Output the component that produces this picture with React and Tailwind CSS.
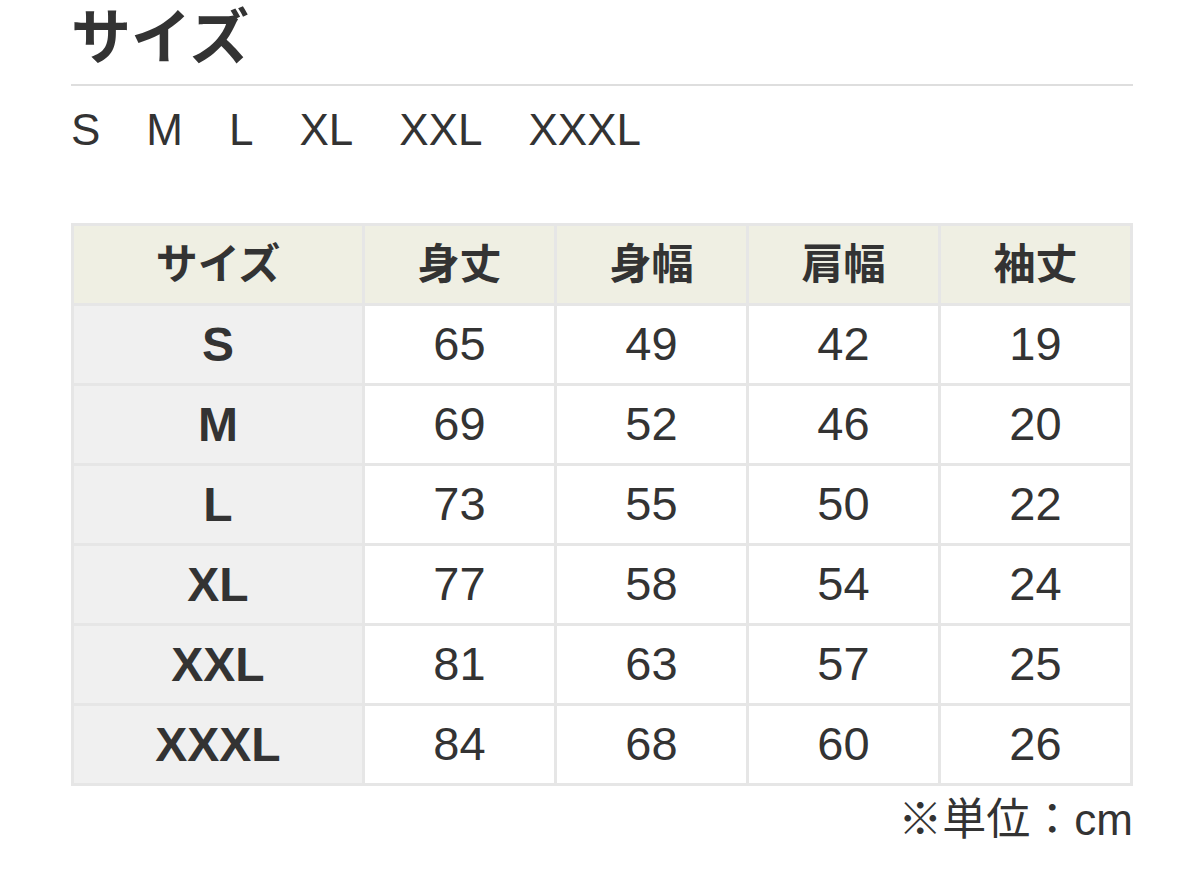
const sizes = ['S', 'M', 'L', 'XL', 'XXL', 'XXXL'];

const headers = ['サイズ', '身丈', '身幅', '肩幅', '袖丈'];

const rows = [
  ['S', 65, 49, 42, 19],
  ['M', 69, 52, 46, 20],
  ['L', 73, 55, 50, 22],
  ['XL', 77, 58, 54, 24],
  ['XXL', 81, 63, 57, 25],
  ['XXXL', 84, 68, 60, 26],
];

export default function App() {
  return (
    <div className="min-h-[872px] bg-white text-[#333] font-['Liberation_Sans','Noto_Sans_CJK_JP',sans-serif]">
      <div className="ml-[71px] w-[1062px]">
        <h2 className="h-[86px] pt-[1px] text-[60px] font-bold leading-[76px] border-b-2 border-[#dedede]">
          サイズ
        </h2>

        <div className="mt-[22px] flex gap-[46px] text-[44px] leading-[44px]">
          {sizes.map((s) => (
            <span key={s}>{s}</span>
          ))}
        </div>

        {/* size chart */}
        <div className="mt-[71px] grid grid-cols-[288px_repeat(4,1fr)] auto-rows-[77px] gap-[3px] p-[3px] bg-[#e6e6e6]">
          {headers.map((h) => (
            <div key={h} className="flex items-center justify-center bg-[#efefe3] text-[42px] font-bold">
              {h}
            </div>
          ))}
          {rows.map((row) =>
            row.map((cell, i) => (
              <div
                key={row[0] + i}
                className={
                  i === 0
                    ? 'flex items-center justify-center bg-[#f0f0f0] text-[48px] font-bold'
                    : 'flex items-center justify-center bg-white text-[47px]'
                }
              >
                {cell}
              </div>
            ))
          )}
        </div>

        <p className="mt-[10px] text-right text-[44px] leading-[48px]">※単位：cm</p>
      </div>
    </div>
  );
}
